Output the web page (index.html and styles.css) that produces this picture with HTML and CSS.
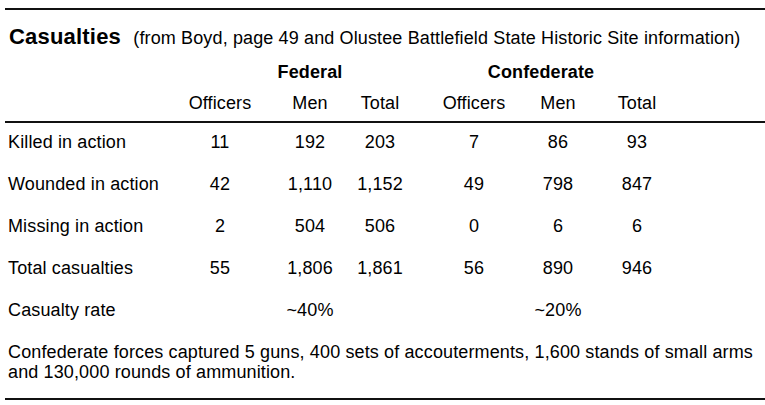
FILE: index.html
```html
<!DOCTYPE html>
<html lang="en">
<head>
<meta charset="utf-8">
<title>Casualties</title>
<link rel="stylesheet" href="styles.css">
</head>
<body>
<section class="casualties">
  <h2 class="title"><span class="title-main">Casualties</span> <span class="title-sub">(from Boyd, page 49 and Olustee Battlefield State Historic Site information)</span></h2>
  <div class="table">
    <div class="row group-row">
      <div class="cell group fed">Federal</div>
      <div class="cell group conf">Confederate</div>
    </div>
    <div class="row head-row">
      <div class="cell c2">Officers</div>
      <div class="cell c3">Men</div>
      <div class="cell c4">Total</div>
      <div class="cell c5">Officers</div>
      <div class="cell c6">Men</div>
      <div class="cell c7">Total</div>
    </div>
    <div class="row body-row">
      <div class="cell label">Killed in action</div>
      <div class="cell c2">11</div>
      <div class="cell c3">192</div>
      <div class="cell c4">203</div>
      <div class="cell c5">7</div>
      <div class="cell c6">86</div>
      <div class="cell c7">93</div>
    </div>
    <div class="row body-row">
      <div class="cell label">Wounded in action</div>
      <div class="cell c2">42</div>
      <div class="cell c3">1,110</div>
      <div class="cell c4">1,152</div>
      <div class="cell c5">49</div>
      <div class="cell c6">798</div>
      <div class="cell c7">847</div>
    </div>
    <div class="row body-row">
      <div class="cell label">Missing in action</div>
      <div class="cell c2">2</div>
      <div class="cell c3">504</div>
      <div class="cell c4">506</div>
      <div class="cell c5">0</div>
      <div class="cell c6">6</div>
      <div class="cell c7">6</div>
    </div>
    <div class="row body-row">
      <div class="cell label">Total casualties</div>
      <div class="cell c2">55</div>
      <div class="cell c3">1,806</div>
      <div class="cell c4">1,861</div>
      <div class="cell c5">56</div>
      <div class="cell c6">890</div>
      <div class="cell c7">946</div>
    </div>
    <div class="row body-row">
      <div class="cell label">Casualty rate</div>
      <div class="cell c3">~40%</div>
      <div class="cell c6">~20%</div>
    </div>
  </div>
  <p class="note">Confederate forces captured 5 guns, 400 sets of accouterments, 1,600 stands of small arms and 130,000 rounds of ammunition.</p>
</section>
</body>
</html>
```
FILE: styles.css
```css
html, body {
  margin: 0;
  padding: 0;
  background: #ffffff;
}

body {
  font-family: "Liberation Sans", Arial, sans-serif;
  color: #000000;
  letter-spacing: 0.13px;
}

.casualties {
  margin: 8px 0 0 5px;
  width: 760px;
  border-top: 2px solid #111111;
  border-bottom: 2px solid #111111;
  padding-bottom: 16px;
}

.title {
  margin: 0;
  padding: 14px 0 0 4px;
  font-size: 22px;
  line-height: 26px;
  font-weight: normal;
  white-space: nowrap;
}

.title-main {
  font-weight: bold;
  letter-spacing: 0.2px;
  margin-right: 6px;
}

.title-sub {
  font-size: 18px;
}

.row {
  display: grid;
  grid-template-columns: 165px 100px 80px 60px 128px 40px 118px 1fr;
  font-size: 18px;
  line-height: 22px;
}

.cell {
  justify-self: unsafe center;
  white-space: nowrap;
}

.label {
  grid-column: 1;
  justify-self: start;
  padding-left: 3px;
}

.c2 { grid-column: 2; }
.c3 { grid-column: 3; }
.c4 { grid-column: 4; }
.c5 { grid-column: 5; }
.c6 { grid-column: 6; }
.c7 { grid-column: 7; }

.group-row {
  padding-top: 11px;
  line-height: 20px;
}

.group {
  font-weight: bold;
}

.fed {
  grid-column: 3;
}

.conf {
  grid-column: 5 / 8;
  margin-right: 24px;
}

.head-row {
  padding-top: 10px;
  padding-bottom: 7px;
  border-bottom: 2px solid #111111;
}

.body-row {
  padding-top: 7.5px;
  padding-bottom: 12.5px;
}

.note {
  margin: 0;
  padding: 9px 4px 0 3px;
  font-size: 18px;
  line-height: 20px;
}
```
